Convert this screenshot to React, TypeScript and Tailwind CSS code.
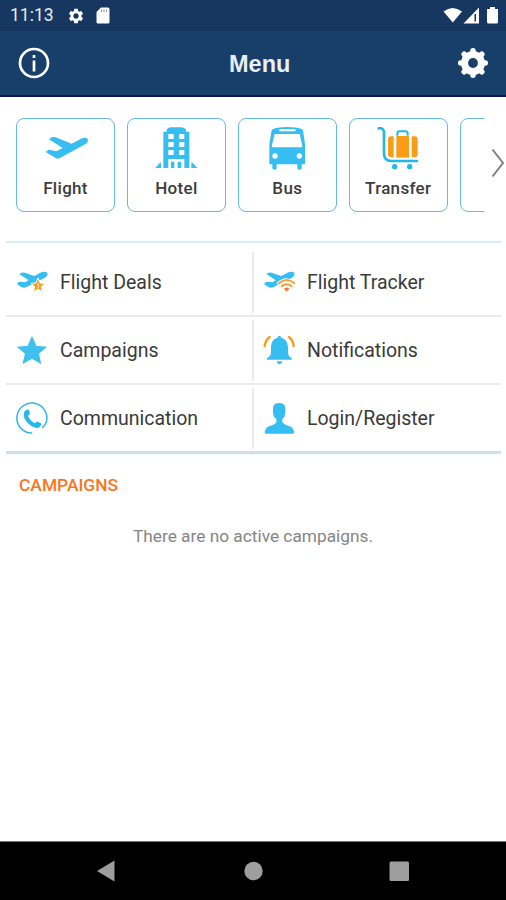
import type { ReactNode } from "react";
import { MdSettings } from "react-icons/md";

function TakeoffIcon() {
  return (
    <svg viewBox="0 0 132 132" className="size-11 fill-[#36bdf1]">
      <path d="M15 37 L23 31 Q28 29 35 31 L83 50 L114 34 Q126 29 131 36 Q134 45 126 50 L49 92 Q41 97 35 93 L5 75 L13 69 Q16 68 20 69 L37 73 L56 63 Z" />
    </svg>
  );
}

function HotelIcon() {
  return (
    <svg viewBox="0 0 132 132" className="size-11 fill-[#36bdf1]">
      <path d="M28 14 H38 V8 Q40 4 49 1 H83 Q94 4 96 8 V14 H106 V123 H91 V96 H43 V123 H28 Z" />
      <path d="M51 104 H61 V123 H51 Z M71 104 H82 V123 H71 Z M4 123 L18 107 H21 V123 Z M130 123 L116 107 H112 V123 Z" />
      <path
        className="fill-white"
        d="M43 21 H59 V36 H43 Z M75 21 H91 V36 H75 Z M43 45 H59 V60 H43 Z M75 45 H91 V60 H75 Z M43 69 H59 V84 H43 Z M75 69 H91 V84 H75 Z"
      />
    </svg>
  );
}

function BusIcon() {
  return (
    <svg viewBox="0 0 132 132" className="size-11 fill-[#36bdf1]">
      <path d="M20 10 Q23 4 38 2 Q67 -2 96 2 Q111 4 114 10 L120 52 V112 H110 V124 Q110 128 104 128 Q97 128 97 124 V112 H35 V124 Q35 128 29 128 Q22 128 22 124 V112 H13 V52 Z" />
      <path className="fill-white" d="M29 21 H104 L112 57 Q112 61 108 61 H24 Q20 61 20 57 Z" />
      <rect className="fill-white" x="42" y="7" width="50" height="6" rx="3" />
      <circle className="fill-white" cx="30" cy="87" r="8" />
      <circle className="fill-white" cx="103" cy="87" r="8" />
    </svg>
  );
}

function TransferIcon() {
  return (
    <svg viewBox="0 0 132 132" className="size-11 fill-none stroke-[#21b8e8]">
      <path strokeWidth="8" strokeLinecap="round" d="M8 4 Q24 2 24 17 V79 Q24 102 46 102 H123" />
      <path strokeWidth="6" d="M64 26 V20 Q64 13 71 13 H88 Q95 13 95 20 V26" />
      <g className="fill-[#fa9d16] stroke-none">
        <path d="M53 28 V91 H45 Q36 91 36 82 V37 Q36 28 45 28 Z" />
        <path d="M61 27 H99 V92 H61 Z" />
        <path d="M107 28 H116 Q125 28 125 37 V82 Q125 91 116 91 H107 Z" />
      </g>
      <circle className="fill-[#21b8e8] stroke-none" cx="56" cy="119" r="8" />
      <circle className="fill-[#21b8e8] stroke-none" cx="101" cy="119" r="8" />
    </svg>
  );
}

function PlaneShape() {
  return (
    <path d="M10 24 Q15 18 26 20 L55 30 L76 19 Q87 15 94 20 Q97 29 87 35 L30 64 Q23 67 16 63 L3 54 Q7 46 15 47 L27 49 L38 43 Z" />
  );
}

function DealsIcon() {
  return (
    <svg viewBox="0 0 96 96" className="size-8 fill-[#36bdf1]">
      <PlaneShape />
      <path
        className="fill-[#fa9d16] stroke-white"
        strokeWidth="3"
        d="M66 36 L72 51 L87 52 L76 62 L80 78 L66 69 L52 78 L56 62 L45 52 L60 51 Z"
      />
      <path className="fill-none stroke-white" strokeWidth="2.5" d="M63 56 L67 53 V66" />
    </svg>
  );
}

function TrackerIcon() {
  return (
    <svg viewBox="0 0 96 96" className="size-8 fill-[#36bdf1]">
      <PlaneShape />
      <path className="fill-white" d="M40 51 Q70 22 100 51 L70 80 Z" />
      <g className="fill-none stroke-[#f3a03c]" strokeWidth="6" strokeLinecap="round">
        <path d="M48 52 Q71 32 94 52" />
        <path d="M56 61 Q71 48 86 61" />
      </g>
      <path className="fill-[#f07f2f]" d="M63 68 Q71 61 79 68 L71 77 Z" />
    </svg>
  );
}

function StarIcon() {
  return (
    <svg viewBox="0 0 96 96" className="size-8 fill-[#40c0ef]">
      <path d="M48 5 L61 35 L93 38 L69 59 L76 91 L48 74 L19 91 L27 59 L2 38 L35 35 Z" />
    </svg>
  );
}

function PhoneIcon() {
  return (
    <svg viewBox="0 0 96 96" className="size-8 fill-[#28b8ea]">
      <path
        className="fill-none stroke-[#28b8ea]"
        strokeWidth="4.5"
        strokeLinecap="round"
        d="M47 93 A45 45 0 1 1 91 60 Q87 70 80 76"
      />
      <path d="M25 29 Q32 20 38 24 L42 33 Q43 37 36 41 Q40 55 57 64 Q62 58 66 59 L75 64 Q79 68 70 76 Q58 82 42 69 Q17 49 25 29 Z" />
    </svg>
  );
}

function BellIcon() {
  return (
    <svg viewBox="0 0 96 96" className="size-8 fill-[#36bdf1]">
      <path d="M44 11 Q44 5 49 5 Q54 5 54 11 Q73 15 75 38 V56 Q76 67 86 72 V77 H12 V72 Q23 67 24 56 V38 Q25 15 44 11 Z" />
      <path d="M41 82 H58 Q56 91 49 91 Q43 91 41 82 Z" />
      <path
        className="fill-none stroke-[#fa9d16]"
        strokeWidth="7"
        strokeLinecap="round"
        d="M5 36 Q8 17 20 9 M78 9 Q90 17 92 36"
      />
    </svg>
  );
}

function PersonIcon() {
  return (
    <svg viewBox="0 0 96 96" className="size-8 fill-[#36bdf1]">
      <path d="M30 18 Q31 3 48 3 Q66 3 67 18 V33 Q66 45 58 51 V61 Q64 69 80 73 Q93 78 93 92 Q93 95 88 95 H10 Q5 95 5 92 Q6 78 18 73 Q35 69 40 61 V51 Q31 45 30 33 Z" />
    </svg>
  );
}

function GearIcon() {
  return (
    <svg viewBox="0 0 32 32" className="size-8">
      <circle className="fill-white" cx="16" cy="16" r="12" />
      <g className="stroke-white" strokeWidth="5.5" strokeLinecap="round">
        <path d="M16 3.700 V28.300 M3.700 16 H28.300" />
        <path d="M7.200 7.200 L24.800 24.800 M24.800 7.200 L7.200 24.800" />
      </g>
      <circle className="fill-[#173f6a]" cx="16" cy="16" r="4.900" />
    </svg>
  );
}

const products: { label: string; icon: ReactNode }[] = [
  { label: "Flight", icon: <TakeoffIcon /> },
  { label: "Hotel", icon: <HotelIcon /> },
  { label: "Bus", icon: <BusIcon /> },
  { label: "Transfer", icon: <TransferIcon /> },
  { label: "", icon: null },
];

const menuRows: { label: string; icon: ReactNode }[][] = [
  [
    { label: "Flight Deals", icon: <DealsIcon /> },
    { label: "Flight Tracker", icon: <TrackerIcon /> },
  ],
  [
    { label: "Campaigns", icon: <StarIcon /> },
    { label: "Notifications", icon: <BellIcon /> },
  ],
  [
    { label: "Communication", icon: <PhoneIcon /> },
    { label: "Login/Register", icon: <PersonIcon /> },
  ],
];

function StatusBar() {
  return (
    <div className="flex h-[31px] items-center bg-[#16375f] pl-[10px] pr-[7px] text-white">
      <span className="w-[57px] pt-px text-[17.5px] leading-none text-[#e6ebf3]">11:13</span>
      <MdSettings className="size-[18px]" />
      <svg viewBox="0 0 14 17" className="ml-[11px] h-[17px] w-[14px] fill-white">
        <path d="M5 0.5 H12 Q13.500 .5 13.500 2 V15 Q13.500 16.500 12 16.500 H2 Q.5 16.500 .5 15 V5 Z" />
        <path className="stroke-[#8494aa]" strokeWidth="1" d="M5.500 2.500 V5 M8 2.500 V5 M10.500 2.500 V5" />
      </svg>
      <svg viewBox="0 0 56 18" className="ml-auto h-[18px] w-14 fill-white">
        <path d="M0.500 4.500 Q9.500 -2.500 19 4.500 L9.800 15.500 Z" />
        <path d="M20.500 16.500 L36 .5 V16.500 Z" />
        <path className="fill-[#16375f]" d="M31.500 7 H33 V14.500 H31.500 Z" />
        <path d="M44 2 H47 V0 H52 V2 H55 V15 Q55 16.500 53.500 16.500 H45.500 Q44 16.500 44 15 Z" />
      </svg>
    </div>
  );
}

export default function App() {
  return (
    <div className="flex h-[900px] w-[506px] flex-col overflow-hidden bg-white font-['Roboto',sans-serif]">
      <StatusBar />

      {/* App bar */}
      <header className="flex h-[66px] items-center border-b-2 border-[#0c1558] bg-[#173f6a] pl-[18px] pr-[17px]">
        <svg viewBox="0 0 32 32" className="size-8 fill-none stroke-white" strokeWidth="2.700">
          <circle cx="16" cy="16" r="14" />
          <path d="M16 13.500 V24.500 M16 8 V11" />
        </svg>
        <h1 className="ml-[179px] mr-auto pt-[3px] text-[23.500px] font-bold font-['Liberation_Sans',sans-serif] leading-none text-[#e9edf4]">
          Menu
        </h1>
        <GearIcon />
      </header>

      {/* Product strip */}
      <div className="flex h-[144px] pt-[21px]">
        <div className="flex w-[484px] gap-[11.900px] overflow-hidden pl-4">
          {products.map((product, i) => (
            <div
              key={i}
              className="flex h-[94px] w-[99px] shrink-0 flex-col items-center rounded-[8px] border-[1.500px] border-[#64b9ea] pt-2"
            >
              <div className="h-11">{product.icon}</div>
              <span className="mt-[7px] text-[17px] font-medium leading-5 tracking-[0.3px] text-[#3c3c3c]">{product.label}</span>
            </div>
          ))}
        </div>
        <svg viewBox="0 0 14 30" className="ml-[7px] mt-[30px] h-[30px] w-[14px] fill-none stroke-[#808080]" strokeWidth="2">
          <path d="M1.500 1.500 L12 15 L1.500 28.500" />
        </svg>
      </div>

      {/* Menu grid */}
      <div className="ml-[6px] mr-[5px] border-t-2 border-b-[3px] border-t-[#d6ebf6] border-b-[#cbe0ec] pt-[6px]">
        {menuRows.map((row, i) => (
          <div key={i} className="flex h-[68px] items-center border-b-[2px] border-[#ebebeb] last:h-[66px] last:border-b-0">
            {row.map((item) => (
              <div
                key={item.label}
                className="flex h-[61px] w-[246px] items-center gap-[12px] pl-[10px] last:w-[249px] last:border-l-2 last:border-[#ebebeb] last:pl-[9px]"
              >
                {item.icon}
                <span className="pt-px text-[19.500px] leading-none text-[#3a3a3a]">{item.label}</span>
              </div>
            ))}
          </div>
        ))}
      </div>

      <section className="flex flex-1 flex-col">
        <h2 className="ml-[19px] mt-[21px] text-[17.400px] font-medium leading-5 text-[#f9761d]">CAMPAIGNS</h2>
        <p className="mt-[31px] text-center text-[17.300px] leading-5 text-[#858585]">There are no active campaigns.</p>
      </section>

      {/* Navigation bar */}
      <nav className="h-[59px] border-t border-[#777] bg-black">
        <svg viewBox="0 0 506 58" className="h-[58px] w-[506px] fill-[#9e9e9e]">
          <path d="M97 29 L114.500 18.500 V39.500 Z" />
          <circle cx="253.500" cy="29" r="9.200" />
          <rect x="389.500" y="19.500" width="19.500" height="19.500" rx="1.500" />
        </svg>
      </nav>
    </div>
  );
}
